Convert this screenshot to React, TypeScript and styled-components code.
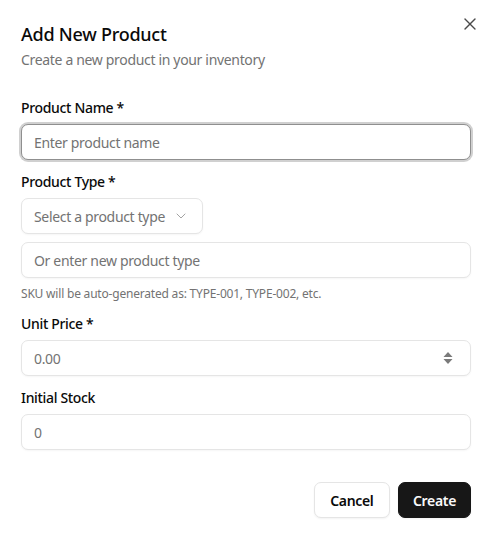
import styled, { createGlobalStyle } from 'styled-components';
import { X, ChevronDown } from 'lucide-react';

const GlobalStyle = createGlobalStyle`
  html, body {
    margin: 0;
    padding: 0;
    background: #ffffff;
  }
  body {
    font-family: "Noto Sans", "Open Sans", sans-serif;
    color: #0a0a0a;
    letter-spacing: -0.33px;
  }
  * {
    box-sizing: border-box;
  }
`;

export default function App() {
  return (
    <>
      <GlobalStyle />
      <Dialog>
        <Header>
          <HeaderText>
            <Title>Add New Product</Title>
            <Subtitle>Create a new product in your inventory</Subtitle>
          </HeaderText>
          <CloseButton aria-label="close">
            <X size={20} strokeWidth={1.6} />
          </CloseButton>
        </Header>

        <Form>
          <Field>
            <Label>Product Name *</Label>
            <Input $focused placeholder="Enter product name" />
          </Field>

          <Field>
            <Label>Product Type *</Label>
            <SelectTrigger type="button">
              <span>Select a product type</span>
              <ChevronDown size={16} strokeWidth={1.5} color="#a3a3a3" />
            </SelectTrigger>
            <Input placeholder="Or enter new product type" />
            <Hint>SKU will be auto-generated as: TYPE-001, TYPE-002, etc.</Hint>
          </Field>

          <Field>
            <Label>Unit Price *</Label>
            <NumberBox>
              <NumberInput placeholder="0.00" />
              <svg width="12" height="18" viewBox="0 0 12 18" aria-hidden="true">
                <path d="M6 3 L10.5 8 L1.5 8 Z" fill="#7a7a7a" />
                <path d="M6 15 L10.5 10 L1.5 10 Z" fill="#7a7a7a" />
              </svg>
            </NumberBox>
          </Field>

          <Field>
            <Label>Initial Stock</Label>
            <Input placeholder="0" />
          </Field>
        </Form>

        <Footer>
          <Button type="button">Cancel</Button>
          <Button type="button" $primary>Create</Button>
        </Footer>
      </Dialog>
    </>
  );
}

const Dialog = styled.div`
  width: 493px;
  min-height: 541px;
  padding: 20px 22px 0 21px;
  display: flex;
  flex-direction: column;
`;

const Header = styled.header`
  display: flex;
  justify-content: space-between;
  align-items: flex-start;
`;

const HeaderText = styled.div`
  display: flex;
  flex-direction: column;
  gap: 2px;
`;

const Title = styled.h2`
  margin: 0;
  font-size: 18px;
  line-height: 28px;
  font-weight: 500;
  letter-spacing: -0.25px;
`;

const Subtitle = styled.p`
  margin: 0;
  font-size: 14px;
  line-height: 20px;
  color: #737373;
`;

const CloseButton = styled.button`
  margin: -6px -9px 0 0;
  border: none;
  background: none;
  padding: 0;
  width: 20px;
  height: 20px;
  color: #4a4a4a;
  display: flex;
  align-items: center;
  justify-content: center;
  cursor: pointer;
`;

const Form = styled.div`
  margin-top: 28px;
  display: flex;
  flex-direction: column;
  gap: 12px;
`;

const Field = styled.div`
  display: flex;
  flex-direction: column;
  align-items: flex-start;
  gap: 8px;
`;

const Label = styled.label`
  font-size: 14px;
  line-height: 20px;
  font-weight: 500;
  margin-bottom: -2px;
`;

const Input = styled.input<{ $focused?: boolean }>`
  width: 100%;
  height: 36px;
  padding: 0 12px;
  border-radius: 7px;
  border: 1px solid ${({ $focused }) => ($focused ? '#8f8f8f' : '#e5e5e5')};
  box-shadow: ${({ $focused }) =>
    $focused ? '0 0 0 2px #d0d0d0' : '0 1px 2px rgba(0, 0, 0, 0.04)'};
  font-family: inherit;
  font-size: 14px;
  letter-spacing: inherit;
  color: #0a0a0a;
  background: #fff;
  outline: none;

  &::placeholder {
    color: #737373;
  }
`;

const SelectTrigger = styled.button`
  height: 36px;
  padding: 0 13px 0 12px;
  display: flex;
  align-items: center;
  gap: 8px;
  border: 1px solid #e5e5e5;
  border-radius: 7px;
  background: #fff;
  box-shadow: 0 1px 2px rgba(0, 0, 0, 0.04);
  font-family: inherit;
  font-size: 14px;
  letter-spacing: inherit;
  color: #737373;
  cursor: pointer;
`;

const Hint = styled.p`
  margin: 0;
  font-size: 12px;
  line-height: 16px;
  letter-spacing: -0.2px;
  color: #737373;
`;

const NumberBox = styled.div`
  width: 100%;
  height: 36px;
  padding: 0 16px 0 12px;
  display: flex;
  align-items: center;
  border: 1px solid #e5e5e5;
  border-radius: 7px;
  background: #fff;
  box-shadow: 0 1px 2px rgba(0, 0, 0, 0.04);
`;

const NumberInput = styled.input`
  flex: 1;
  min-width: 0;
  border: none;
  outline: none;
  padding: 0;
  font-family: inherit;
  font-size: 14px;
  letter-spacing: inherit;
  background: transparent;

  &::placeholder {
    color: #737373;
  }
`;

const Footer = styled.footer`
  margin-top: 32px;
  display: flex;
  justify-content: flex-end;
  gap: 8px;
`;

const Button = styled.button<{ $primary?: boolean }>`
  height: 36px;
  padding: 0 ${({ $primary }) => ($primary ? '14px' : '15.5px')};
  border-radius: 7px;
  font-family: inherit;
  font-size: 14px;
  font-weight: 600;
  letter-spacing: inherit;
  cursor: pointer;
  border: 1px solid ${({ $primary }) => ($primary ? '#171717' : '#e5e5e5')};
  background: ${({ $primary }) => ($primary ? '#171717' : '#ffffff')};
  color: ${({ $primary }) => ($primary ? '#fafafa' : '#0a0a0a')};
  box-shadow: 0 1px 2px rgba(0, 0, 0, 0.05);
`;
